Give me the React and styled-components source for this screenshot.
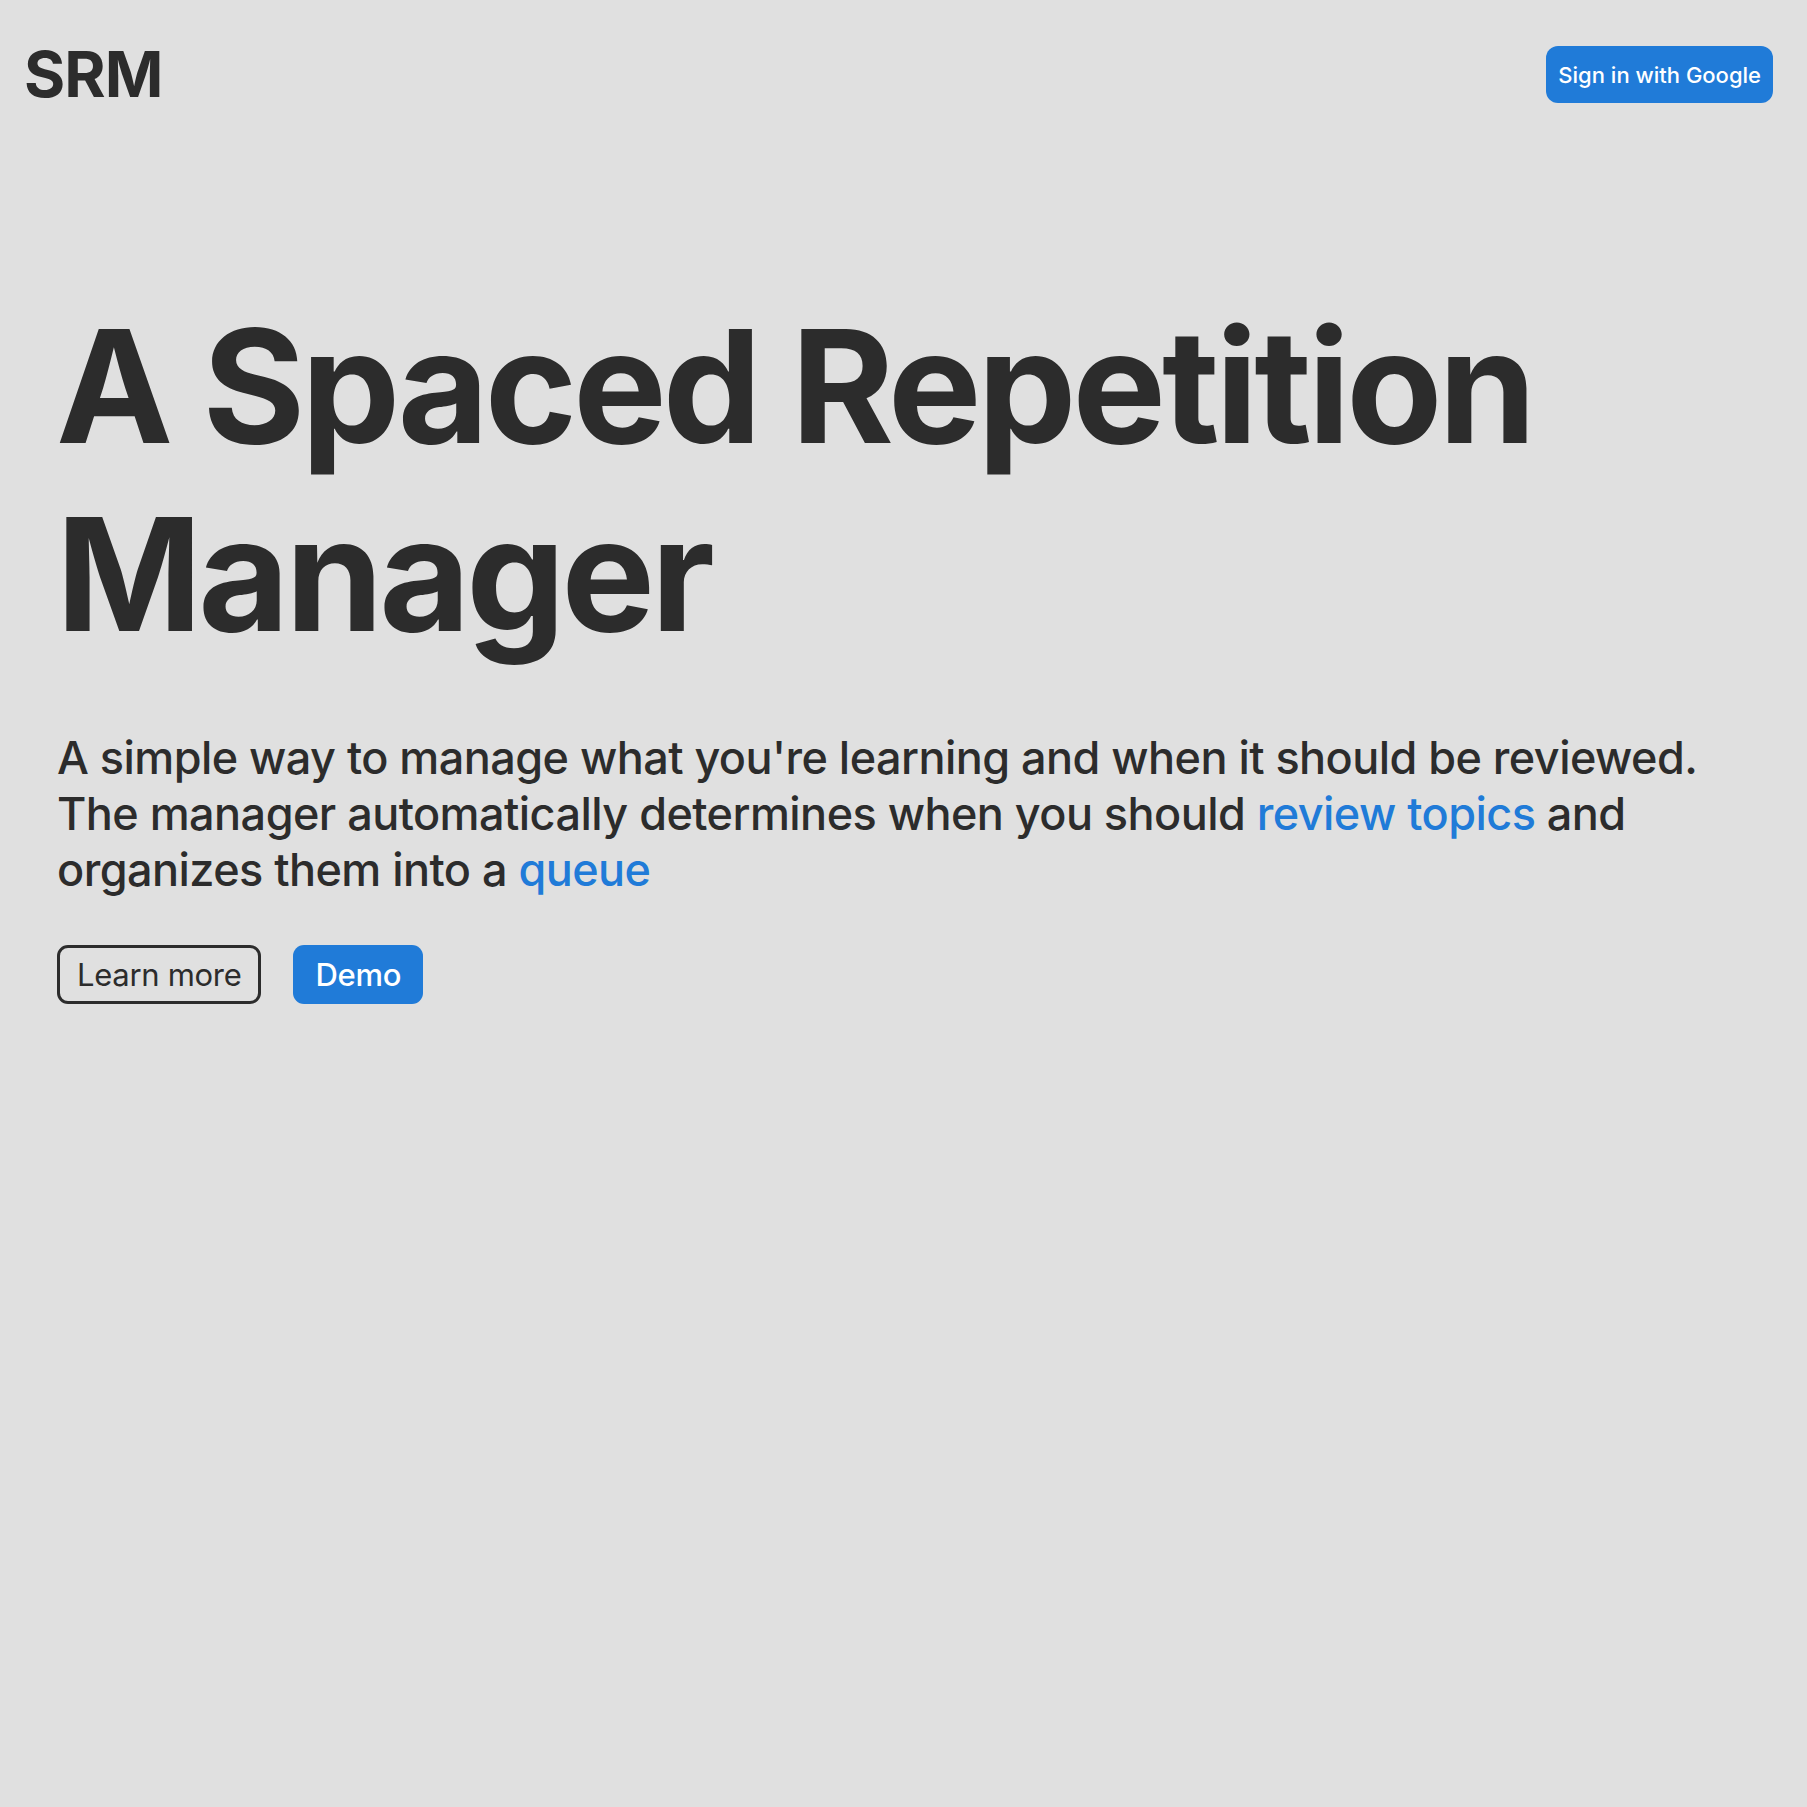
import React from "react";
import styled, { createGlobalStyle } from "styled-components";

const Global = createGlobalStyle`
  html, body { margin: 0; padding: 0; background: #e0e0e0; }
  body { font-family: Inter, "Noto Sans", sans-serif; color: #2c2c2c; }
  #root { min-height: 1807px; background: #e0e0e0; }
`;

const Header = styled.header`
  display: flex;
  align-items: center;
  justify-content: space-between;
  padding: 46px 34px 0 24px;
`;

const Logo = styled.div`
  font-size: 63px;
  font-weight: 700;
  letter-spacing: -1px;
  line-height: 57px;
`;

const PrimaryButton = styled.button`
  font-family: Inter, sans-serif;
  background: #207bd8;
  color: #fff;
  border: none;
  border-radius: ${(p) => (p.$small ? "12px" : "11px")};
  font-size: ${(p) => (p.$small ? "22px" : "31px")};
  font-weight: 500;
  height: ${(p) => (p.$small ? "57px" : "59px")};
  padding: ${(p) => (p.$small ? "0 12px" : "0 22px")};
  letter-spacing: ${(p) => (p.$small ? "0" : "-0.3px")};
  cursor: pointer;
`;

const OutlineButton = styled.button`
  font-family: Inter, sans-serif;
  background: transparent;
  color: #2c2c2c;
  border: 3px solid #2c2c2c;
  border-radius: 11px;
  font-size: 31px;
  font-weight: 400;
  height: 59px;
  padding: 0 17px;
  letter-spacing: -0.3px;
  cursor: pointer;
`;

const Main = styled.main`
  padding: 189px 40px 0 56px;
`;

const Title = styled.h1`
  margin: 0;
  font-size: 157px;
  font-weight: 700;
  line-height: 188px;
  letter-spacing: -4px;
`;

const Lead = styled.p`
  margin: 62px 0 0 1px;
  font-size: 45px;
  line-height: 56px;
  font-weight: 500;
  letter-spacing: -0.55px;
`;

const Link = styled.a`
  color: #207bd8;
  text-decoration: none;
`;

const Actions = styled.div`
  display: flex;
  gap: 32px;
  margin: 47px 0 0 1px;
`;

export default function App() {
  return (
    <>
      <Global />
      <Header>
        <Logo>SRM</Logo>
        <PrimaryButton $small>Sign in with Google</PrimaryButton>
      </Header>
      <Main>
        <Title>
          A Spaced Repetition
          <br />
          Manager
        </Title>
        <Lead>
          A simple way to manage what you're learning and when it should be reviewed.
          <br />
          The manager automatically determines when you should{" "}
          <Link href="#">review topics</Link> and organizes them into a{" "}
          <Link href="#">queue</Link>
        </Lead>
        <Actions>
          <OutlineButton>Learn more</OutlineButton>
          <PrimaryButton>Demo</PrimaryButton>
        </Actions>
      </Main>
    </>
  );
}
